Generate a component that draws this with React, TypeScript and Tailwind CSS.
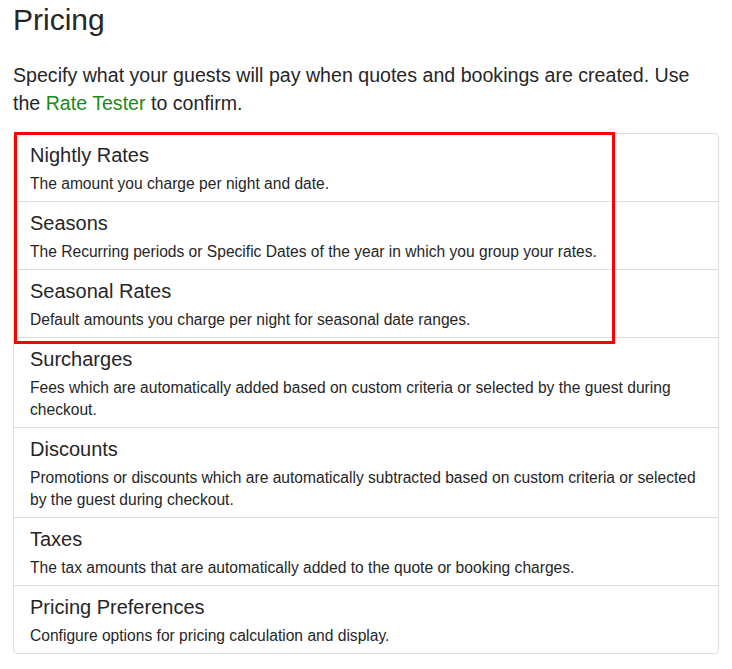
const items: [string, string][] = [
  ['Nightly Rates', 'The amount you charge per night and date.'],
  ['Seasons', 'The Recurring periods or Specific Dates of the year in which you group your rates.'],
  ['Seasonal Rates', 'Default amounts you charge per night for seasonal date ranges.'],
  ['Surcharges', 'Fees which are automatically added based on custom criteria or selected by the guest during checkout.'],
  ['Discounts', 'Promotions or discounts which are automatically subtracted based on custom criteria or selected by the guest during checkout.'],
  ['Taxes', 'The tax amounts that are automatically added to the quote or booking charges.'],
  ['Pricing Preferences', 'Configure options for pricing calculation and display.'],
];

export default function App() {
  return (
    <div className="min-h-screen bg-white px-[13px] text-[#262626] font-['Liberation_Sans',Arial,sans-serif]">
      <h1 className="pt-[2px] text-[30px] leading-[36px]">Pricing</h1>
      <p className="mt-[23px] pr-[20px] text-[19.6px] leading-[28px]">
        Specify what your guests will pay when quotes and bookings are created. Use the{' '}
        <a className="text-[#1a8a1a]">Rate Tester</a> to confirm.
      </p>
      <div className="relative mt-[16px] rounded border border-[#ddd]">
        {items.map(([title, desc], i) => (
          <div key={title} className={'px-4 pt-[9px] pb-[6px]' + (i > 0 ? ' border-t border-[#ddd]' : '')}>
            <div className="text-[20px] leading-[24px]">{title}</div>
            <div className="mt-[6px] text-[15.6px] leading-[22px]">{desc}</div>
          </div>
        ))}
        {/* annotation highlight over the first three rows */}
        <div className="pointer-events-none absolute left-0 top-[-2px] h-[212px] w-[601px] border-[3px] border-[#ff0000]" />
      </div>
    </div>
  );
}
